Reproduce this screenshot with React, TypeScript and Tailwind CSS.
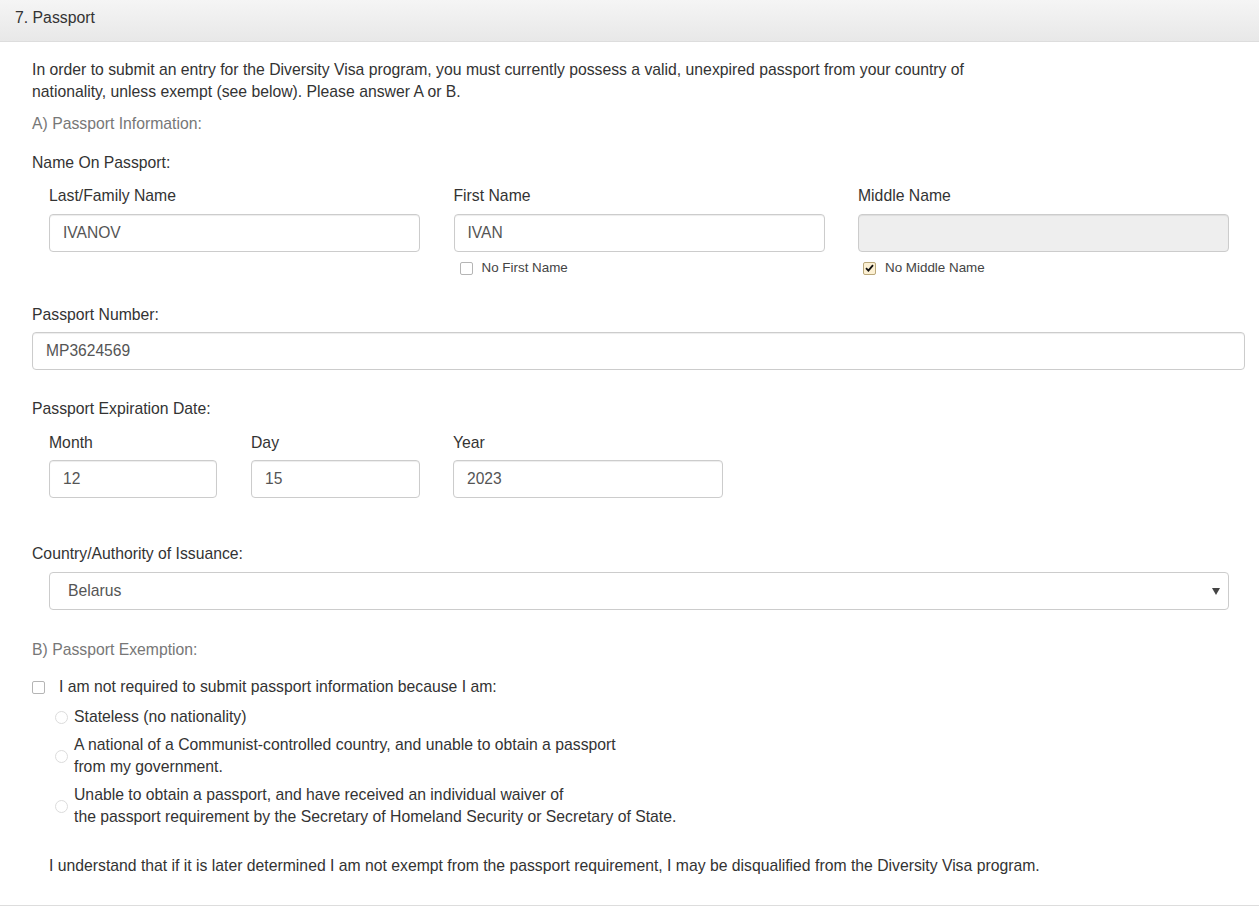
import React from "react";

const font = { fontFamily: '"Liberation Sans", Arial, sans-serif' };

function TextInput({ value, disabled, className = "" }: { value?: string; disabled?: boolean; className?: string }) {
  return (
    <div
      className={`h-[38px] rounded-[4px] border border-[#cccccc] flex items-center px-[13px] text-[15.6px] text-[#555555] shadow-[inset_0_1px_1px_rgba(0,0,0,0.075)] ${
        disabled ? "bg-[#eeeeee]" : "bg-white"
      } ${className}`}
    >
      {value}
    </div>
  );
}

function Check({ checked }: { checked?: boolean }) {
  return (
    <span
      className={`inline-flex items-center justify-center w-[13px] h-[13px] rounded-[2px] border ${
        checked ? "border-[#b9a77a] bg-[#fcf0d3]" : "border-[#b5b5b5] bg-white"
      }`}
    >
      {checked && (
        <svg width="9" height="8" viewBox="0 0 9 8">
          <path d="M1 4.2 L3.4 6.6 L8 1.2" fill="none" stroke="#111" strokeWidth="1.8" />
        </svg>
      )}
    </span>
  );
}

function Radio() {
  return <span className="inline-block w-[13px] h-[13px] rounded-full border border-[#dcdcdc] bg-white shrink-0" />;
}

export default function App() {
  return (
    <div style={font} className="w-[1259px] min-h-[907px] bg-white text-[#333333] text-[15.75px] leading-[22px]">
      <div className="h-[42px] border-b border-[#dddddd] bg-gradient-to-b from-[#f5f5f5] to-[#e8e8e8] pl-[15px] pt-[7px] text-[15.8px]">
        7. Passport
      </div>
      <div className="pl-[32px] pr-[14px] pt-[17px] pb-[28px] border-b border-[#dddddd]">
        <p>
          In order to submit an entry for the Diversity Visa program, you must currently possess a valid, unexpired passport from your country of
          <br />
          nationality, unless exempt (see below). Please answer A or B.
        </p>
        <div className="mt-[10px] text-[#777777]">A) Passport Information:</div>
        <div className="mt-[17px]">Name On Passport:</div>

        <div className="mt-[11px] ml-[17px] w-[1180px] grid grid-cols-3 gap-x-[33.5px]">
          <div>
            <div>Last/Family Name</div>
            <TextInput value="IVANOV" className="mt-[7px]" />
          </div>
          <div>
            <div>First Name</div>
            <TextInput value="IVAN" className="mt-[7px]" />
            <div className="mt-[5px] flex items-center h-[22px] pl-[6px] text-[13.4px] text-[#444444]">
              <Check />
              <span className="ml-[9px]">No First Name</span>
            </div>
          </div>
          <div>
            <div>Middle Name</div>
            <TextInput disabled className="mt-[7px]" />
            <div className="mt-[5px] flex items-center h-[22px] pl-[5px] text-[13.4px] text-[#444444]">
              <Check checked />
              <span className="ml-[9px]">No Middle Name</span>
            </div>
          </div>
        </div>

        <div className="mt-[25px]">Passport Number:</div>
        <TextInput value="MP3624569" className="mt-[6px]" />

        <div className="mt-[28px]">Passport Expiration Date:</div>
        <div className="mt-[12px] ml-[17px] flex">
          <div className="w-[168px]">
            <div>Month</div>
            <TextInput value="12" className="mt-[6px]" />
          </div>
          <div className="w-[169px] ml-[34px]">
            <div>Day</div>
            <TextInput value="15" className="mt-[6px]" />
          </div>
          <div className="w-[270px] ml-[33px]">
            <div>Year</div>
            <TextInput value="2023" className="mt-[6px]" />
          </div>
        </div>

        <div className="mt-[45px]">Country/Authority of Issuance:</div>
        <div className="mt-[7px] ml-[17px] w-[1180px] h-[38px] rounded-[4px] border border-[#cccccc] bg-white flex items-center justify-between pl-[18px] pr-[8px] text-[#555555]">
          <span>Belarus</span>
          <svg width="8" height="7" viewBox="0 0 8 7">
            <path d="M0 0 H8 L4 7 Z" fill="#444444" />
          </svg>
        </div>

        <div className="mt-[29px] text-[#777777]">B) Passport Exemption:</div>
        <div className="mt-[15px] flex items-center">
          <Check />
          <span className="ml-[14px]">I am not required to submit passport information because I am:</span>
        </div>
        <div className="ml-[23px]">
          <div className="mt-[8px] flex items-center">
            <Radio />
            <span className="ml-[6px]">Stateless (no nationality)</span>
          </div>
          <div className="mt-[6px] flex items-center">
            <Radio />
            <span className="ml-[6px]">
              A national of a Communist-controlled country, and unable to obtain a passport
              <br />
              from my government.
            </span>
          </div>
          <div className="mt-[6px] flex items-center">
            <Radio />
            <span className="ml-[6px]">
              Unable to obtain a passport, and have received an individual waiver of
              <br />
              the passport requirement by the Secretary of Homeland Security or Secretary of State.
            </span>
          </div>
        </div>
        <div className="mt-[27px] ml-[17px]">
          I understand that if it is later determined I am not exempt from the passport requirement, I may be disqualified from the Diversity Visa program.
        </div>
      </div>
    </div>
  );
}
